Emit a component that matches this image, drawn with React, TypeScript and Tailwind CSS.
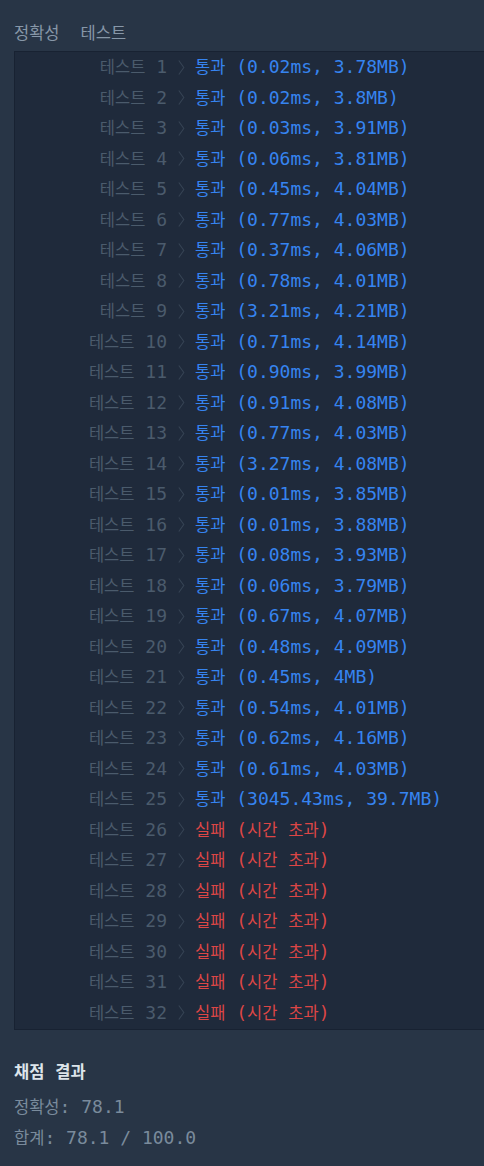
import React from "react";

type Row = { n: number; ok: boolean; text: string };

const rows: Row[] = [
  { n: 1, ok: true, text: "통과 (0.02ms, 3.78MB)" },
  { n: 2, ok: true, text: "통과 (0.02ms, 3.8MB)" },
  { n: 3, ok: true, text: "통과 (0.03ms, 3.91MB)" },
  { n: 4, ok: true, text: "통과 (0.06ms, 3.81MB)" },
  { n: 5, ok: true, text: "통과 (0.45ms, 4.04MB)" },
  { n: 6, ok: true, text: "통과 (0.77ms, 4.03MB)" },
  { n: 7, ok: true, text: "통과 (0.37ms, 4.06MB)" },
  { n: 8, ok: true, text: "통과 (0.78ms, 4.01MB)" },
  { n: 9, ok: true, text: "통과 (3.21ms, 4.21MB)" },
  { n: 10, ok: true, text: "통과 (0.71ms, 4.14MB)" },
  { n: 11, ok: true, text: "통과 (0.90ms, 3.99MB)" },
  { n: 12, ok: true, text: "통과 (0.91ms, 4.08MB)" },
  { n: 13, ok: true, text: "통과 (0.77ms, 4.03MB)" },
  { n: 14, ok: true, text: "통과 (3.27ms, 4.08MB)" },
  { n: 15, ok: true, text: "통과 (0.01ms, 3.85MB)" },
  { n: 16, ok: true, text: "통과 (0.01ms, 3.88MB)" },
  { n: 17, ok: true, text: "통과 (0.08ms, 3.93MB)" },
  { n: 18, ok: true, text: "통과 (0.06ms, 3.79MB)" },
  { n: 19, ok: true, text: "통과 (0.67ms, 4.07MB)" },
  { n: 20, ok: true, text: "통과 (0.48ms, 4.09MB)" },
  { n: 21, ok: true, text: "통과 (0.45ms, 4MB)" },
  { n: 22, ok: true, text: "통과 (0.54ms, 4.01MB)" },
  { n: 23, ok: true, text: "통과 (0.62ms, 4.16MB)" },
  { n: 24, ok: true, text: "통과 (0.61ms, 4.03MB)" },
  { n: 25, ok: true, text: "통과 (3045.43ms, 39.7MB)" },
  { n: 26, ok: false, text: "실패 (시간 초과)" },
  { n: 27, ok: false, text: "실패 (시간 초과)" },
  { n: 28, ok: false, text: "실패 (시간 초과)" },
  { n: 29, ok: false, text: "실패 (시간 초과)" },
  { n: 30, ok: false, text: "실패 (시간 초과)" },
  { n: 31, ok: false, text: "실패 (시간 초과)" },
  { n: 32, ok: false, text: "실패 (시간 초과)" },
];

function T({ s }: { s: string }) {
  const parts = s.split(/([\uAC00-\uD7A3]+)/);
  return (
    <>
      {parts.map((p, i) =>
        /[\uAC00-\uD7A3]/.test(p) ? (
          <span key={i} className="font-['Noto_Sans_CJK_KR',sans-serif] text-[16.5px]">
            {p}
          </span>
        ) : (
          <span key={i}>{p}</span>
        )
      )}
    </>
  );
}

function Chevron() {
  return (
    <svg width="7" height="15" viewBox="0 0 7 15" className="block">
      <polyline points="0.8,0.5 5.8,7.5 0.8,14.5" fill="none" stroke="#364354" strokeWidth="1.1" />
    </svg>
  );
}

export default function App() {
  return (
    <div className="min-h-[1166px] w-[484px] overflow-hidden bg-[#283546] font-['DejaVu_Sans_Mono','Noto_Sans_CJK_KR',monospace] text-[18px]">
      <div className="pt-[20px] pl-[14px] h-[44px] flex items-center gap-[21px] text-[#8797a8] font-['Noto_Sans_CJK_KR',sans-serif] text-[16.5px] leading-[24px]">
        <span>정확성</span>
        <span>테스트</span>
      </div>
      <div className="ml-[14px] mt-[7px] w-[520px] border border-[#182232] bg-[#1f2a3b] pb-[1px]">
        {rows.map((r) => (
          <div key={r.n} className="flex items-center h-[30.5px] whitespace-pre">
            <div className="w-[152px] text-right text-[#4b5b6c] leading-none">
              <T s={`테스트 ${r.n}`} />
            </div>
            <div className="w-[28px] flex justify-center pl-[1px]">
              <Chevron />
            </div>
            <div className={`leading-none ${r.ok ? "text-[#3684f0]" : "text-[#dc4646]"}`}>
              <T s={r.text} />
            </div>
          </div>
        ))}
      </div>
      <div className="pl-[14px] pt-[29px]">
        <div className="h-[24px] flex items-center text-[#dde4ea] font-bold whitespace-pre">
          <T s="채점 결과" />
        </div>
        <div className="mt-[8px] h-[30px] flex items-center text-[#7a8b9c] whitespace-pre">
          <T s="정확성: 78.1" />
        </div>
        <div className="h-[32px] flex items-center text-[#7a8b9c] whitespace-pre">
          <T s="합계: 78.1 / 100.0" />
        </div>
      </div>
    </div>
  );
}
